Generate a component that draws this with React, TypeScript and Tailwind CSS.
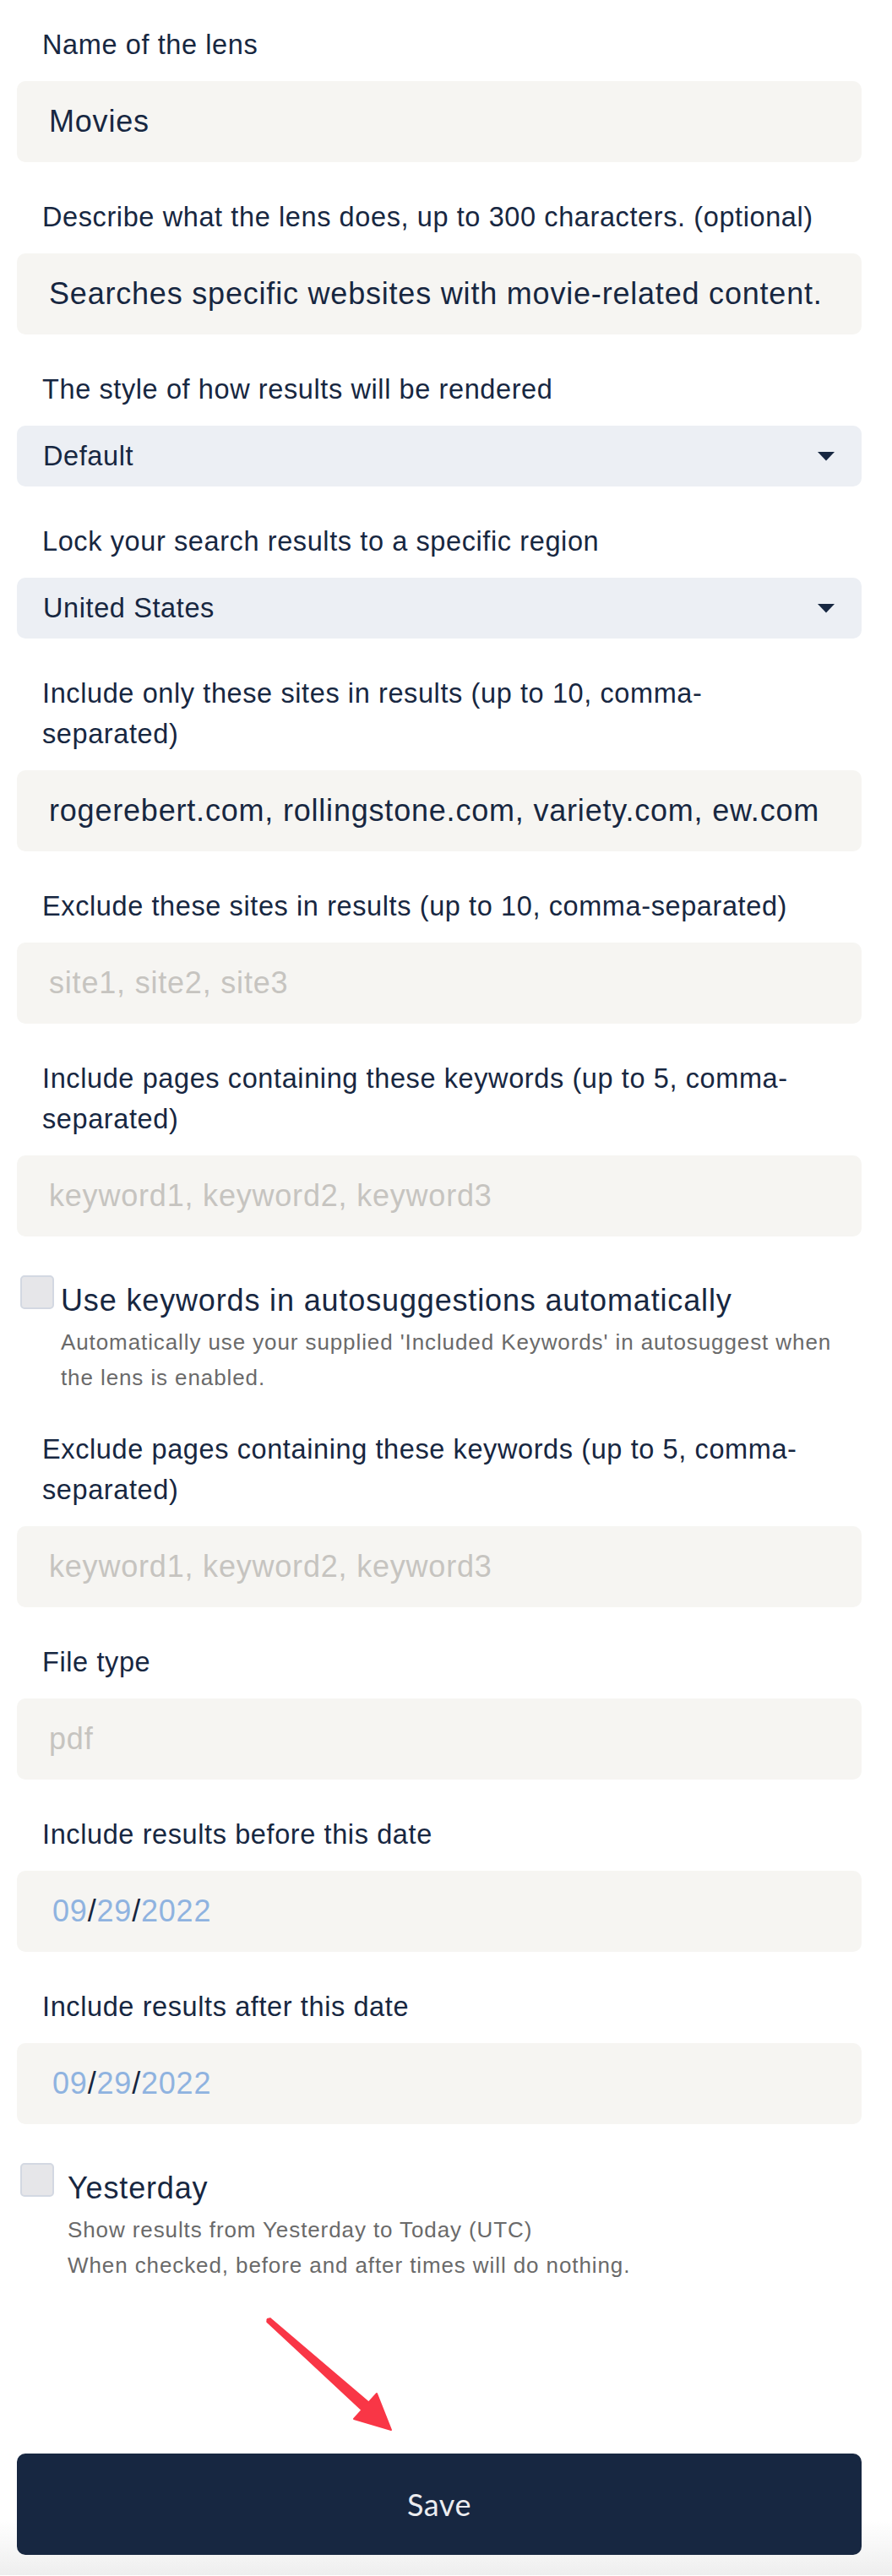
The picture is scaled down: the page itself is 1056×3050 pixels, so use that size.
import React from 'react';

const navy = 'text-[#172741]';

function Label({ children }: { children: React.ReactNode }) {
  return (
    <label className="mb-[19px] block pl-[30px] pr-[45px] text-[32.5px] leading-[48px] tracking-[0.6px]">
      {children}
    </label>
  );
}

function TextInput({ value, placeholder }: { value?: string; placeholder?: string }) {
  return (
    <input
      defaultValue={value}
      placeholder={placeholder}
      className={`block h-[96px] w-full rounded-[10px] bg-[#f6f5f2] pl-[38px] pr-[20px] text-[36px] tracking-[0.8px] ${navy} outline-none placeholder:text-[#c6c4c0]`}
    />
  );
}

function Select({ value }: { value: string }) {
  return (
    <div className="flex h-[72px] items-center justify-between rounded-[10px] bg-[#eceff4] pl-[31px] pr-[32px] text-[32.5px] tracking-[0.6px]">
      <span>{value}</span>
      <svg width="20" height="11" viewBox="0 0 20 11">
        <path d="M0 0 H20 L10 10.5 Z" fill="#172741" />
      </svg>
    </div>
  );
}

function DateInput() {
  return (
    <div className="flex h-[96px] items-center rounded-[10px] bg-[#f6f5f2] pl-[42px] text-[36px] tracking-[0.8px]">
      <span className="text-[#8fb3e0]">09</span>
      <span>/</span>
      <span className="text-[#8fb3e0]">29</span>
      <span>/</span>
      <span className="text-[#8fb3e0]">2022</span>
    </div>
  );
}

function Field({ label, children, first }: { label: string; children: React.ReactNode; first?: boolean }) {
  return (
    <div className={first ? '' : 'mt-[41px]'}>
      <Label>{label}</Label>
      {children}
    </div>
  );
}

function CheckRow({ title, lines, gap }: { title: string; lines: string[]; gap: string }) {
  return (
    <div className="mt-[46px] flex items-start pl-[4px]">
      <div className="h-[40px] w-[40px] shrink-0 rounded-[5px] border-2 border-[#d3d8e2] bg-[#e6e6e9]" />
      <div className={`${gap} flex-1 pt-[3px]`}>
        <div className="text-[36px] leading-[54px] tracking-[0.85px]">{title}</div>
        <div className="mt-[1px] text-[26px] leading-[42px] tracking-[0.9px] text-[#6a6a6a]">
          {lines.map((l) => (
            <p key={l}>{l}</p>
          ))}
        </div>
      </div>
    </div>
  );
}

export default function App() {
  return (
    <div className={`relative w-full bg-white ${navy} font-['Liberation_Sans',Arial,sans-serif]`}>
      <div className="pl-[20px] pr-[36px] pt-[29px]">
        <Field label="Name of the lens" first>
          <TextInput value="Movies" />
        </Field>
        <Field label="Describe what the lens does, up to 300 characters. (optional)">
          <TextInput value="Searches specific websites with movie-related content." />
        </Field>
        <Field label="The style of how results will be rendered">
          <Select value="Default" />
        </Field>
        <Field label="Lock your search results to a specific region">
          <Select value="United States" />
        </Field>
        <Field label="Include only these sites in results (up to 10, comma-separated)">
          <TextInput value="rogerebert.com, rollingstone.com, variety.com, ew.com" />
        </Field>
        <Field label="Exclude these sites in results (up to 10, comma-separated)">
          <TextInput placeholder="site1, site2, site3" />
        </Field>
        <Field label="Include pages containing these keywords (up to 5, comma-separated)">
          <TextInput placeholder="keyword1, keyword2, keyword3" />
        </Field>

        <CheckRow
          title="Use keywords in autosuggestions automatically"
          gap="ml-[8px]"
          lines={["Automatically use your supplied 'Included Keywords' in autosuggest when the lens is enabled."]}
        />

        <div className="mt-[40px]">
          <Label>Exclude pages containing these keywords (up to 5, comma-separated)</Label>
          <TextInput placeholder="keyword1, keyword2, keyword3" />
        </div>
        <Field label="File type">
          <TextInput placeholder="pdf" />
        </Field>
        <Field label="Include results before this date">
          <DateInput />
        </Field>
        <Field label="Include results after this date">
          <DateInput />
        </Field>

        <CheckRow
          title="Yesterday"
          gap="ml-[16px]"
          lines={['Show results from Yesterday to Today (UTC)', 'When checked, before and after times will do nothing.']}
        />
      </div>

      {/* footer */}
      <div className="mt-[202px] bg-gradient-to-b from-white from-55% to-[#eeeeee] pb-[24px] pl-[20px] pr-[36px]">
        <button className="flex h-[120px] w-full items-center justify-center rounded-[10px] bg-[#172741] font-['Lato',sans-serif] text-[36px] tracking-[0.5px] text-[#ebecef]">
          Save
        </button>
      </div>

      {/* annotation arrow */}
      <svg className="absolute left-[300px] top-[2740px]" width="180" height="150" viewBox="0 0 180 150">
        <path
          d="M19.7 5.1 L136.5 104.5 L146 94 L163 137 L119 124 L128.5 113.5 L16.3 8.9 Z"
          fill="#f93646"
          stroke="#f93646"
          strokeWidth="2"
          strokeLinejoin="round"
        />
        <circle cx="18" cy="7" r="2.6" fill="#f93646" />
      </svg>
    </div>
  );
}
